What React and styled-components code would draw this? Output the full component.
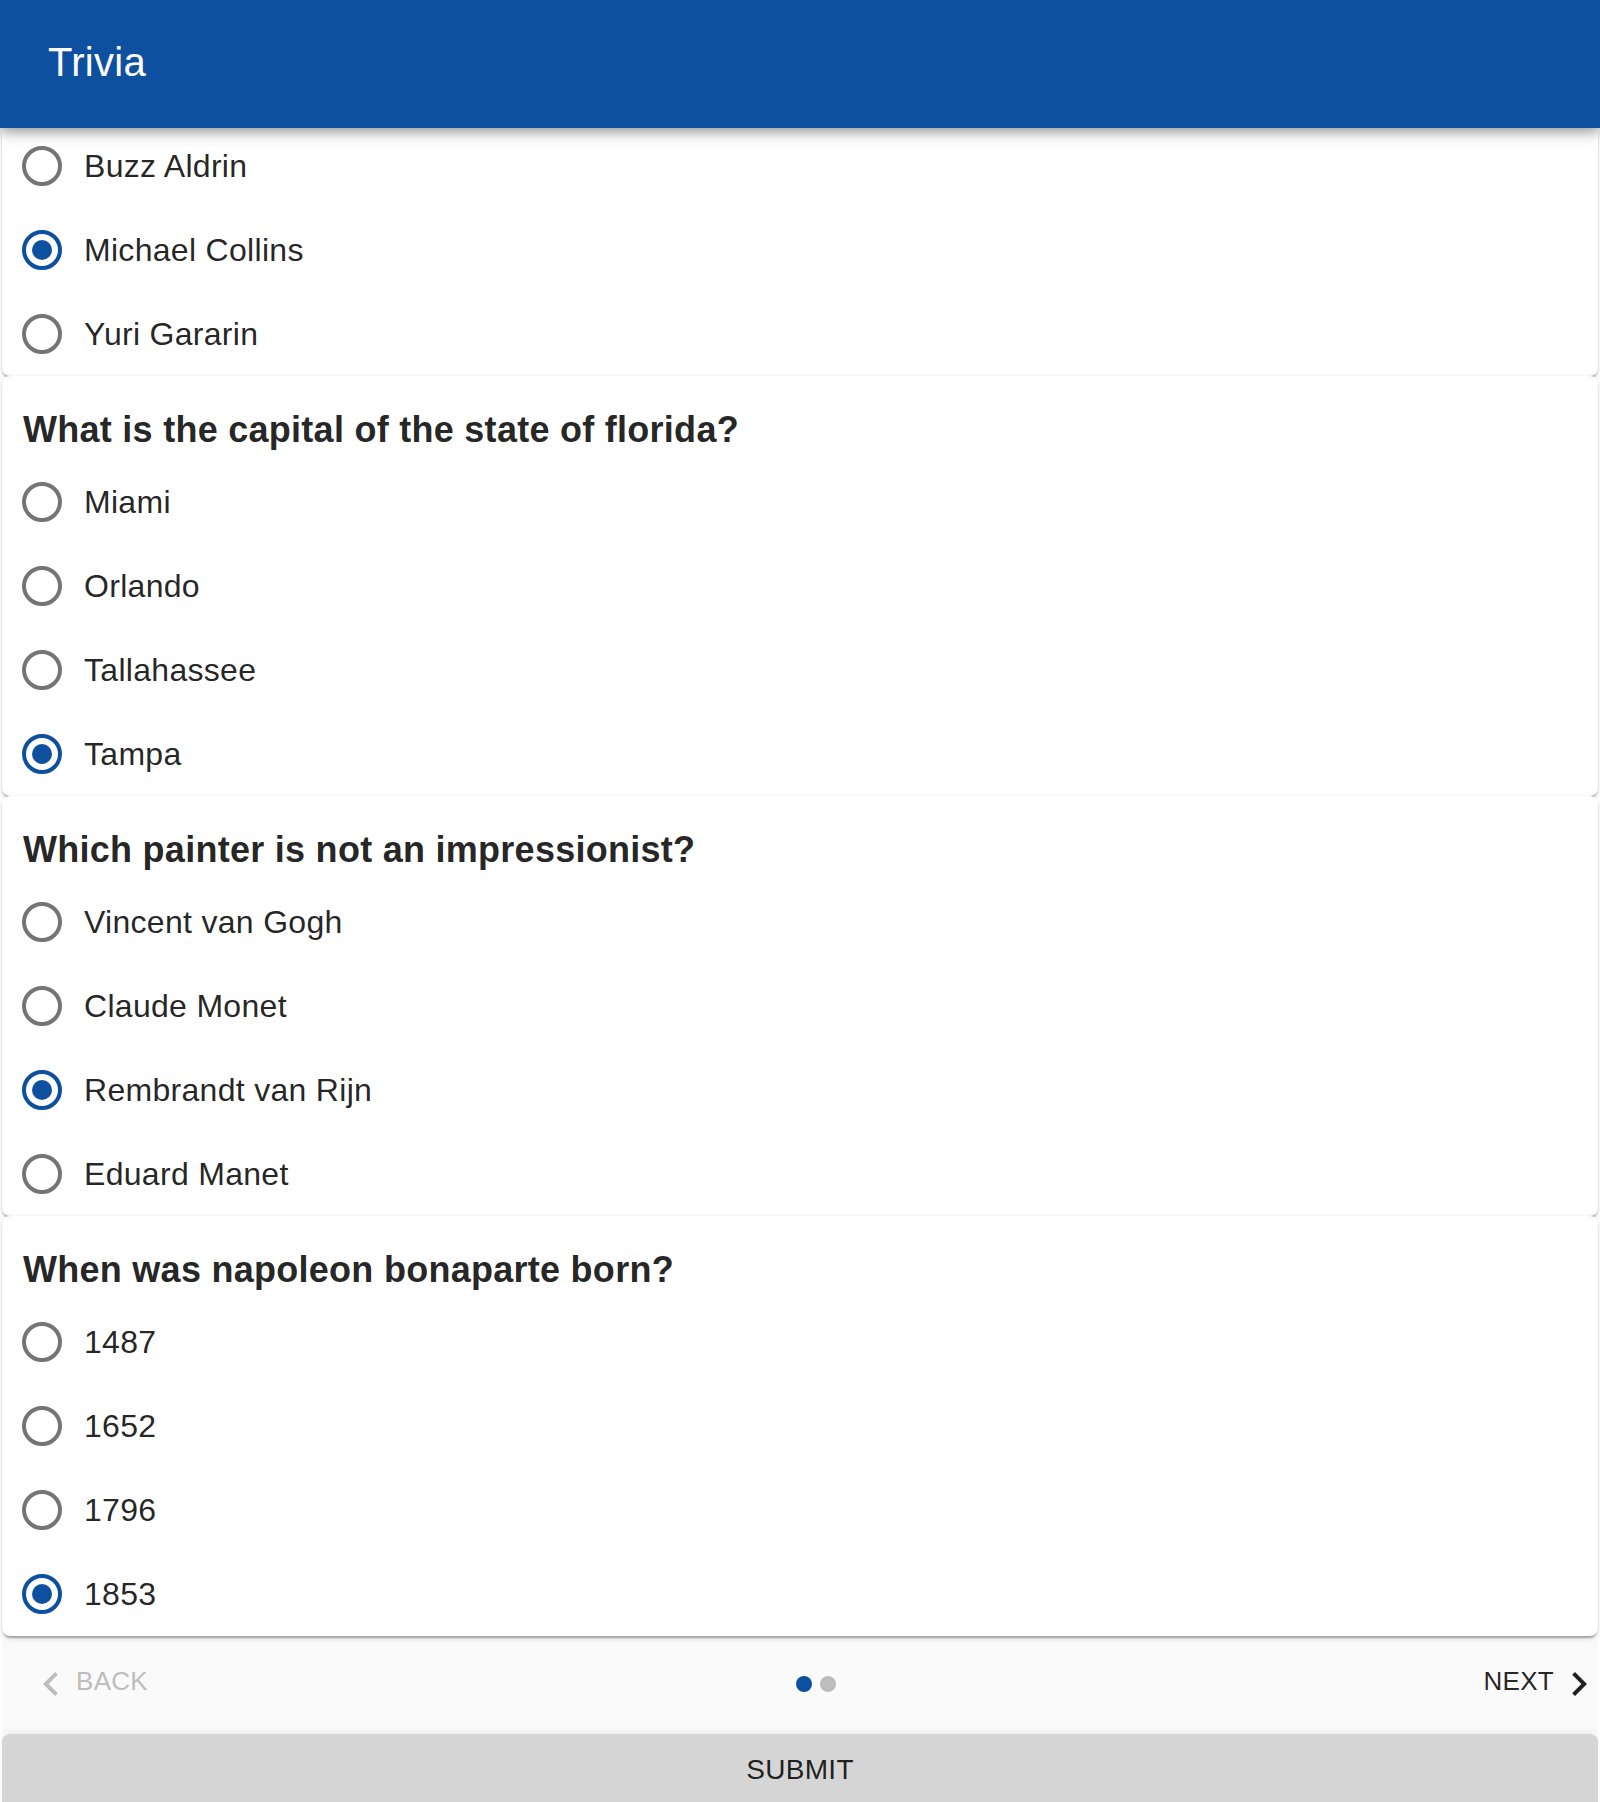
import React, { useState } from 'react';
import styled, { createGlobalStyle } from 'styled-components';

const BLUE = '#0e50a0';

const GlobalStyle = createGlobalStyle`
    body {
        margin: 0;
        background: #ffffff;
        font-family: "Liberation Sans", Arial, sans-serif;
        color: rgba(0, 0, 0, 0.87);
    }
`;

const Page = styled.div`
    width: 1600px;
    height: 1802px;
    overflow: hidden;
    display: flex;
    flex-direction: column;
`;

const AppBar = styled.header`
    position: relative;
    z-index: 2;
    height: 128px;
    flex-shrink: 0;
    display: flex;
    align-items: center;
    padding: 0 48px;
    box-sizing: border-box;
    background: ${BLUE};
    color: #ffffff;
    box-shadow: 0 4px 8px -2px rgba(0, 0, 0, 0.2), 0 8px 10px 0 rgba(0, 0, 0, 0.14),
        0 2px 20px 0 rgba(0, 0, 0, 0.12);

    h1 {
        margin: 0 0 4px;
        font-size: 40px;
        font-weight: 400;
        letter-spacing: 0.3px;
    }
`;

const Content = styled.main`
    margin-top: -4px;
    padding: 0 2px;
    display: flex;
    flex-direction: column;
`;

const Card = styled.section`
    position: relative;
    background: #ffffff;
    border-radius: 8px;
    box-shadow: 0 4px 2px -2px rgba(0, 0, 0, 0.2), 0 2px 2px 0 rgba(0, 0, 0, 0.14),
        0 2px 6px 0 rgba(0, 0, 0, 0.12);
`;

const Question = styled.h2`
    margin: 0;
    height: 84px;
    box-sizing: border-box;
    padding: 32px 21px 0;
    font-size: 36px;
    line-height: 44px;
    font-weight: 700;
    letter-spacing: 0.27px;
    color: rgba(0, 0, 0, 0.87);
`;

const Option = styled.label`
    display: flex;
    align-items: center;
    height: 84px;
    cursor: pointer;
    font-size: 32px;
    letter-spacing: 0.3px;
    color: rgba(0, 0, 0, 0.87);

    input {
        display: none;
    }
`;

const RadioBox = styled.span`
    width: 84px;
    height: 84px;
    display: flex;
    align-items: center;
    justify-content: center;
    flex-shrink: 0;
    margin-left: -2px;
    color: ${(p) => (p.$checked ? BLUE : '#757575')};
`;

const Stepper = styled.nav`
    height: 96px;
    margin-top: 2px;
    display: flex;
    align-items: center;
    justify-content: space-between;
    padding: 0 10px 0 40px;
    background: #fafafa;
`;

const StepButton = styled.button`
    display: flex;
    align-items: flex-start;
    gap: 18px;
    margin-bottom: 11px;
    padding: 0;
    border: none;
    background: none;
    font-family: inherit;
    font-size: 26px;
    line-height: 30px;
    letter-spacing: 0.3px;
    text-transform: uppercase;
    color: ${(p) => (p.disabled ? '#bdbdbd' : 'rgba(0, 0, 0, 0.87)')};
    cursor: ${(p) => (p.disabled ? 'default' : 'pointer')};

    svg {
        display: block;
        margin-top: 6px;
    }
`;

const Dots = styled.div`
    display: flex;
    gap: 8px;
    margin-bottom: 4px;
`;

const Dot = styled.span`
    width: 16px;
    height: 16px;
    border-radius: 50%;
    background: ${(p) => (p.$active ? BLUE : '#bdbdbd')};
`;

const SubmitButton = styled.button`
    height: 72px;
    flex-shrink: 0;
    border: none;
    border-radius: 8px 8px 0 0;
    background: #d5d5d5;
    box-shadow: 0 -2px 6px rgba(0, 0, 0, 0.06);
    font-family: inherit;
    font-size: 28px;
    letter-spacing: 0.3px;
    color: rgba(0, 0, 0, 0.87);
    cursor: pointer;
`;

const questions = [
    { id: 'q1', title: null, options: ['Buzz Aldrin', 'Michael Collins', 'Yuri Gararin'], selected: 1 },
    {
        id: 'q2',
        title: 'What is the capital of the state of florida?',
        options: ['Miami', 'Orlando', 'Tallahassee', 'Tampa'],
        selected: 3,
    },
    {
        id: 'q3',
        title: 'Which painter is not an impressionist?',
        options: ['Vincent van Gogh', 'Claude Monet', 'Rembrandt van Rijn', 'Eduard Manet'],
        selected: 2,
    },
    {
        id: 'q4',
        title: 'When was napoleon bonaparte born?',
        options: ['1487', '1652', '1796', '1853'],
        selected: 3,
    },
];

const RadioIcon = ({ checked }) => (
    <svg width="48" height="48" viewBox="0 0 24 24">
        <circle cx="12" cy="12" r="9" fill="none" stroke="currentColor" strokeWidth="2" />
        {checked && <circle cx="12" cy="12" r="5" fill="currentColor" />}
    </svg>
);

const ChevronLeft = () => (
    <svg width="16" height="24" viewBox="7.5 6 8 12">
        <path fill="currentColor" d="M15.41 16.59 10.83 12l4.58-4.59L14 6l-6 6 6 6 1.41-1.41z" />
    </svg>
);

const ChevronRight = () => (
    <svg width="16" height="24" viewBox="8.5 6 8 12">
        <path fill="currentColor" d="M8.59 16.59 13.17 12 8.59 7.41 10 6l6 6-6 6-1.41-1.41z" />
    </svg>
);

const QuestionCard = ({ question, value, onSelect }) => (
    <Card>
        {question.title && <Question>{question.title}</Question>}
        {question.options.map((opt, i) => (
            <Option key={opt}>
                <input
                    type="radio"
                    name={question.id}
                    checked={value === i}
                    onChange={() => onSelect(i)}
                />
                <RadioBox $checked={value === i}>
                    <RadioIcon checked={value === i} />
                </RadioBox>
                {opt}
            </Option>
        ))}
    </Card>
);

const App = () => {
    const [answers, setAnswers] = useState(() =>
        Object.fromEntries(questions.map((q) => [q.id, q.selected]))
    );

    return (
        <Page>
            <GlobalStyle />
            <AppBar>
                <h1>Trivia</h1>
            </AppBar>
            <Content>
                {questions.map((q) => (
                    <QuestionCard
                        key={q.id}
                        question={q}
                        value={answers[q.id]}
                        onSelect={(i) => setAnswers((a) => ({ ...a, [q.id]: i }))}
                    />
                ))}
                <Stepper>
                    <StepButton disabled>
                        <ChevronLeft />
                        Back
                    </StepButton>
                    <Dots>
                        <Dot $active />
                        <Dot />
                    </Dots>
                    <StepButton>
                        Next
                        <ChevronRight />
                    </StepButton>
                </Stepper>
                <SubmitButton>SUBMIT</SubmitButton>
            </Content>
        </Page>
    );
};

export default App;
